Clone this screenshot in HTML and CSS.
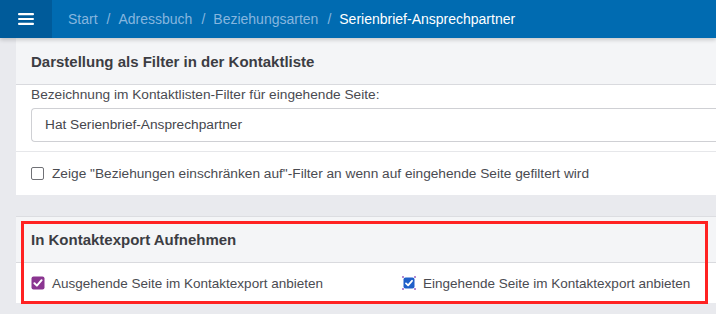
FILE: index.html
```html
<!DOCTYPE html>
<html lang="de">
<head>
    <meta charset="UTF-8">
    <title>Serienbrief-Ansprechpartner</title>
    <link rel="stylesheet" href="styles.css">
</head>
<body>
    <header class="topbar">
        <button class="menu-btn">
            <svg width="16" height="12" viewBox="0 0 16 12">
                <rect x="0" y="0" width="16" height="2.2" rx="1" fill="#fff"/>
                <rect x="0" y="4.9" width="16" height="2.2" rx="1" fill="#fff"/>
                <rect x="0" y="9.8" width="16" height="2.2" rx="1" fill="#fff"/>
            </svg>
        </button>
        <nav class="crumbs">
            <span>Start</span><span class="sep">/</span>
            <span>Adressbuch</span><span class="sep">/</span>
            <span>Beziehungsarten</span><span class="sep">/</span>
            <span class="active">Serienbrief-Ansprechpartner</span>
        </nav>
    </header>

    <main class="content">
        <section class="card">
            <div class="card-head">Darstellung als Filter in der Kontaktliste</div>
            <div class="card-body">
                <label class="field-label">Bezeichnung im Kontaktlisten-Filter für eingehende Seite:</label>
                <div class="text-input">Hat Serienbrief-Ansprechpartner</div>
            </div>
            <div class="check-row">
                <span class="box"></span>
                <span>Zeige "Beziehungen einschränken auf"-Filter an wenn auf eingehende Seite gefiltert wird</span>
            </div>
        </section>

        <section class="card card-export">
            <div class="card-head">In Kontaktexport Aufnehmen</div>
            <div class="check-row two-col">
                <div class="check">
                    <svg class="box-svg" width="14" height="14" viewBox="0 0 14 14">
                        <rect x="0.5" y="0.5" width="13" height="13" rx="2" fill="#8a3590"/>
                        <path d="M3.4 7.2 L5.9 9.6 L10.6 4.2" stroke="#fff" stroke-width="2" fill="none" stroke-linecap="round" stroke-linejoin="round"/>
                    </svg>
                    <span>Ausgehende Seite im Kontaktexport anbieten</span>
                </div>
                <div class="check">
                    <svg class="box-svg" width="14" height="14" viewBox="0 0 14 14">
                        <rect x="1.5" y="1.5" width="11" height="11" rx="2" fill="#1f5fc9"/>
                        <path d="M4 7.4 L6.1 9.3 L10 4.8" stroke="#fff" stroke-width="1.8" fill="none" stroke-linecap="round" stroke-linejoin="round"/>
                        <rect x="0" y="0" width="2" height="2" fill="#b58ad0"/>
                        <rect x="12" y="0" width="2" height="2" fill="#b58ad0"/>
                        <rect x="0" y="12" width="2" height="2" fill="#b58ad0"/>
                        <rect x="12" y="12" width="2" height="2" fill="#b58ad0"/>
                    </svg>
                    <span>Eingehende Seite im Kontaktexport anbieten</span>
                </div>
            </div>
            <div class="highlight"></div>
        </section>
    </main>
</body>
</html>
```

FILE: styles.css
```css
body {
    font-family: 'Liberation Sans', Arial, sans-serif;
    background: #e9eaee;
    margin: 0;
    padding: 0;
    width: 716px;
    height: 314px;
    overflow: hidden;
    color: #4a4b51;
}
.topbar {
    display: flex;
    align-items: center;
    height: 38px;
    background: #006bb1;
    box-shadow: 0 2px 4px rgba(0, 0, 0, 0.18);
    position: relative;
    z-index: 2;
}
.menu-btn {
    width: 52px;
    height: 38px;
    background: #005b9a;
    border: none;
    padding: 0;
    display: flex;
    align-items: center;
    justify-content: center;
}
.crumbs {
    display: flex;
    align-items: center;
    margin-left: 16px;
    font-size: 14px;
    color: #86b6df;
    white-space: nowrap;
}
.crumbs .sep {
    margin: 0 8px 0 9px;
}
.crumbs .active {
    color: #ffffff;
}
.content {
    display: flex;
    flex-direction: column;
    gap: 21px;
    padding-left: 16px;
    width: 740px;
}
.card {
    background: #ffffff;
    border-top: 1px solid #dcdde1;
    position: relative;
}
.card:first-child {
    border-top: none;
}
.card-head {
    background: #f4f5f7;
    height: 46px;
    line-height: 48px;
    padding-left: 15px;
    font-size: 15px;
    font-weight: bold;
    color: #3c3d43;
    border-bottom: 1px solid #d9dade;
}
.card-body {
    padding: 2px 0 9px 15px;
    border-bottom: 1px solid #e6e7ea;
}
.field-label {
    display: block;
    font-size: 13.7px;
    line-height: 16px;
    margin-bottom: 5px;
}
.text-input {
    height: 32px;
    line-height: 32px;
    border: 1px solid #cfd0d4;
    border-right: none;
    border-radius: 4px 0 0 4px;
    padding-left: 13px;
    font-size: 13.7px;
    color: #45464c;
}
.check-row {
    display: flex;
    align-items: center;
    height: 43px;
    padding-left: 15px;
    font-size: 13.7px;
    gap: 8px;
}
.box {
    width: 11px;
    height: 11px;
    border: 1px solid #707176;
    border-radius: 2px;
}
.card-export .card-head {
    height: 45px;
    line-height: 46px;
}
.two-col {
    display: grid;
    grid-template-columns: 371px auto;
    height: 40px;
    gap: 0;
    font-size: 13.5px;
}
.check {
    display: flex;
    align-items: center;
    gap: 7px;
}
.box-svg {
    display: block;
}
.highlight {
    position: absolute;
    left: 5px;
    top: 4px;
    width: 681px;
    height: 77px;
    border: 3px solid #ff2222;
    pointer-events: none;
}
```
